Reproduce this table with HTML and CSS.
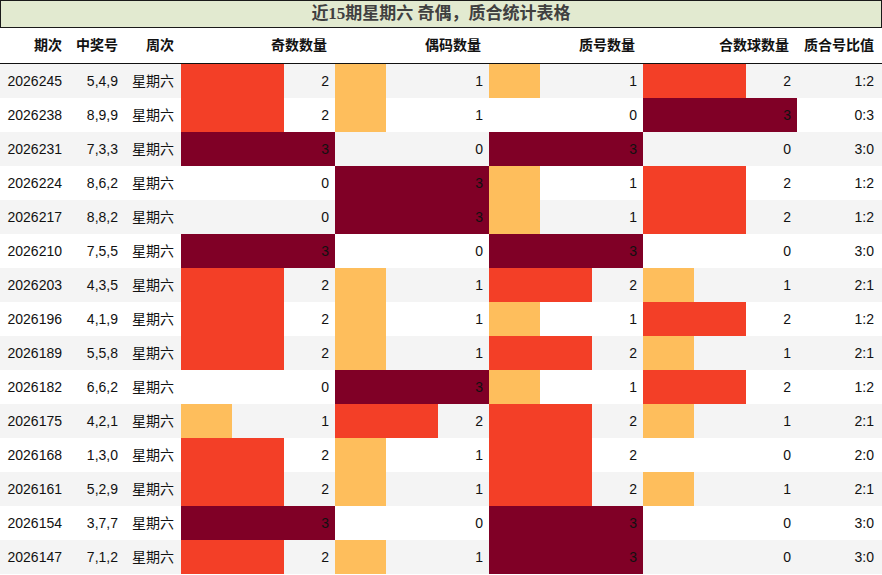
FILE: index.html
```html
<!DOCTYPE html>
<html lang="zh">
<head>
<meta charset="utf-8">
<title>近15期星期六 奇偶，质合统计表格</title>
<link rel="stylesheet" href="styles.css">
</head>
<body>
<div class="page">
  <div class="title">近15期星期六 奇偶，质合统计表格</div>
  <div class="table" id="table">
    <div class="row head">
      <div class="cell">期次</div>
      <div class="cell">中奖号</div>
      <div class="cell week">周次</div>
      <div class="cell">奇数数量</div>
      <div class="cell">偶码数量</div>
      <div class="cell">质号数量</div>
      <div class="cell">合数球数量</div>
      <div class="cell">质合号比值</div>
    </div>
  </div>
</div>
<script src="app.js"></script>
</body>
</html>
```
FILE: app.js
```js
var data = [
  ["2026245","5,4,9",2,1,1,2,"1:2"],
  ["2026238","8,9,9",2,1,0,3,"0:3"],
  ["2026231","7,3,3",3,0,3,0,"3:0"],
  ["2026224","8,6,2",0,3,1,2,"1:2"],
  ["2026217","8,8,2",0,3,1,2,"1:2"],
  ["2026210","7,5,5",3,0,3,0,"3:0"],
  ["2026203","4,3,5",2,1,2,1,"2:1"],
  ["2026196","4,1,9",2,1,1,2,"1:2"],
  ["2026189","5,5,8",2,1,2,1,"2:1"],
  ["2026182","6,6,2",0,3,1,2,"1:2"],
  ["2026175","4,2,1",1,2,2,1,"2:1"],
  ["2026168","1,3,0",2,1,2,0,"2:0"],
  ["2026161","5,2,9",2,1,2,1,"2:1"],
  ["2026154","3,7,7",3,0,3,0,"3:0"],
  ["2026147","7,1,2",2,1,3,0,"3:0"]
];
var table = document.getElementById("table");
data.forEach(function (d, i) {
  var row = document.createElement("div");
  row.className = "row body " + (i % 2 === 0 ? "odd" : "even");
  var html = '<div class="cell">' + d[0] + '</div>' +
             '<div class="cell">' + d[1] + '</div>' +
             '<div class="cell week">星期六</div>';
  for (var k = 2; k < 6; k++) {
    var v = d[k];
    html += '<div class="cell bar"><span class="fill v' + v + '" style="width:' + (v / 3 * 100) + '%"></span><span class="num">' + v + '</span></div>';
  }
  html += '<div class="cell">' + d[6] + '</div>';
  row.innerHTML = html;
  table.appendChild(row);
});
```
FILE: styles.css
```css
html, body {
  margin: 0;
  padding: 0;
  background: #ffffff;
}
.page {
  width: 882px;
  font-family: "Liberation Sans", Arial, "Noto Sans CJK SC", sans-serif;
  font-size: 14px;
  color: #111;
}
.title {
  box-sizing: border-box;
  width: 882px;
  height: 28px;
  border: 1px solid #1a1a1a;
  background: #e2ead0;
  color: #404040;
  font-family: "Liberation Serif", "Noto Sans CJK SC", serif;
  font-weight: bold;
  font-size: 17px;
  line-height: 25px;
  text-align: center;
}
.table {
  display: flex;
  flex-direction: column;
}
.row {
  display: grid;
  grid-template-columns: 70px 56px 55px 154px 154px 154px 154px 85px;
}
.head {
  box-sizing: border-box;
  height: 36px;
  border-bottom: 1px solid #111;
  font-weight: bold;
  color: #111;
}
.head .cell {
  line-height: 35px;
}
.cell {
  text-align: right;
  padding-right: 8px;
  white-space: nowrap;
}
.cell.week {
  padding-right: 7px;
}
.body {
  height: 34px;
}
.body .cell {
  line-height: 34px;
}
.odd { background: #f4f4f4; }
.even { background: #ffffff; }
.bar {
  display: grid;
  padding-right: 0;
}
.bar .fill,
.bar .num {
  grid-area: 1 / 1;
}
.fill {
  display: block;
  height: 34px;
}
.fill.v1 { background: #febe5c; }
.fill.v2 { background: #f33f27; }
.fill.v3 { background: #800026; }
.num {
  justify-self: end;
  padding-right: 6px;
  position: relative;
  color: #111;
}
```
